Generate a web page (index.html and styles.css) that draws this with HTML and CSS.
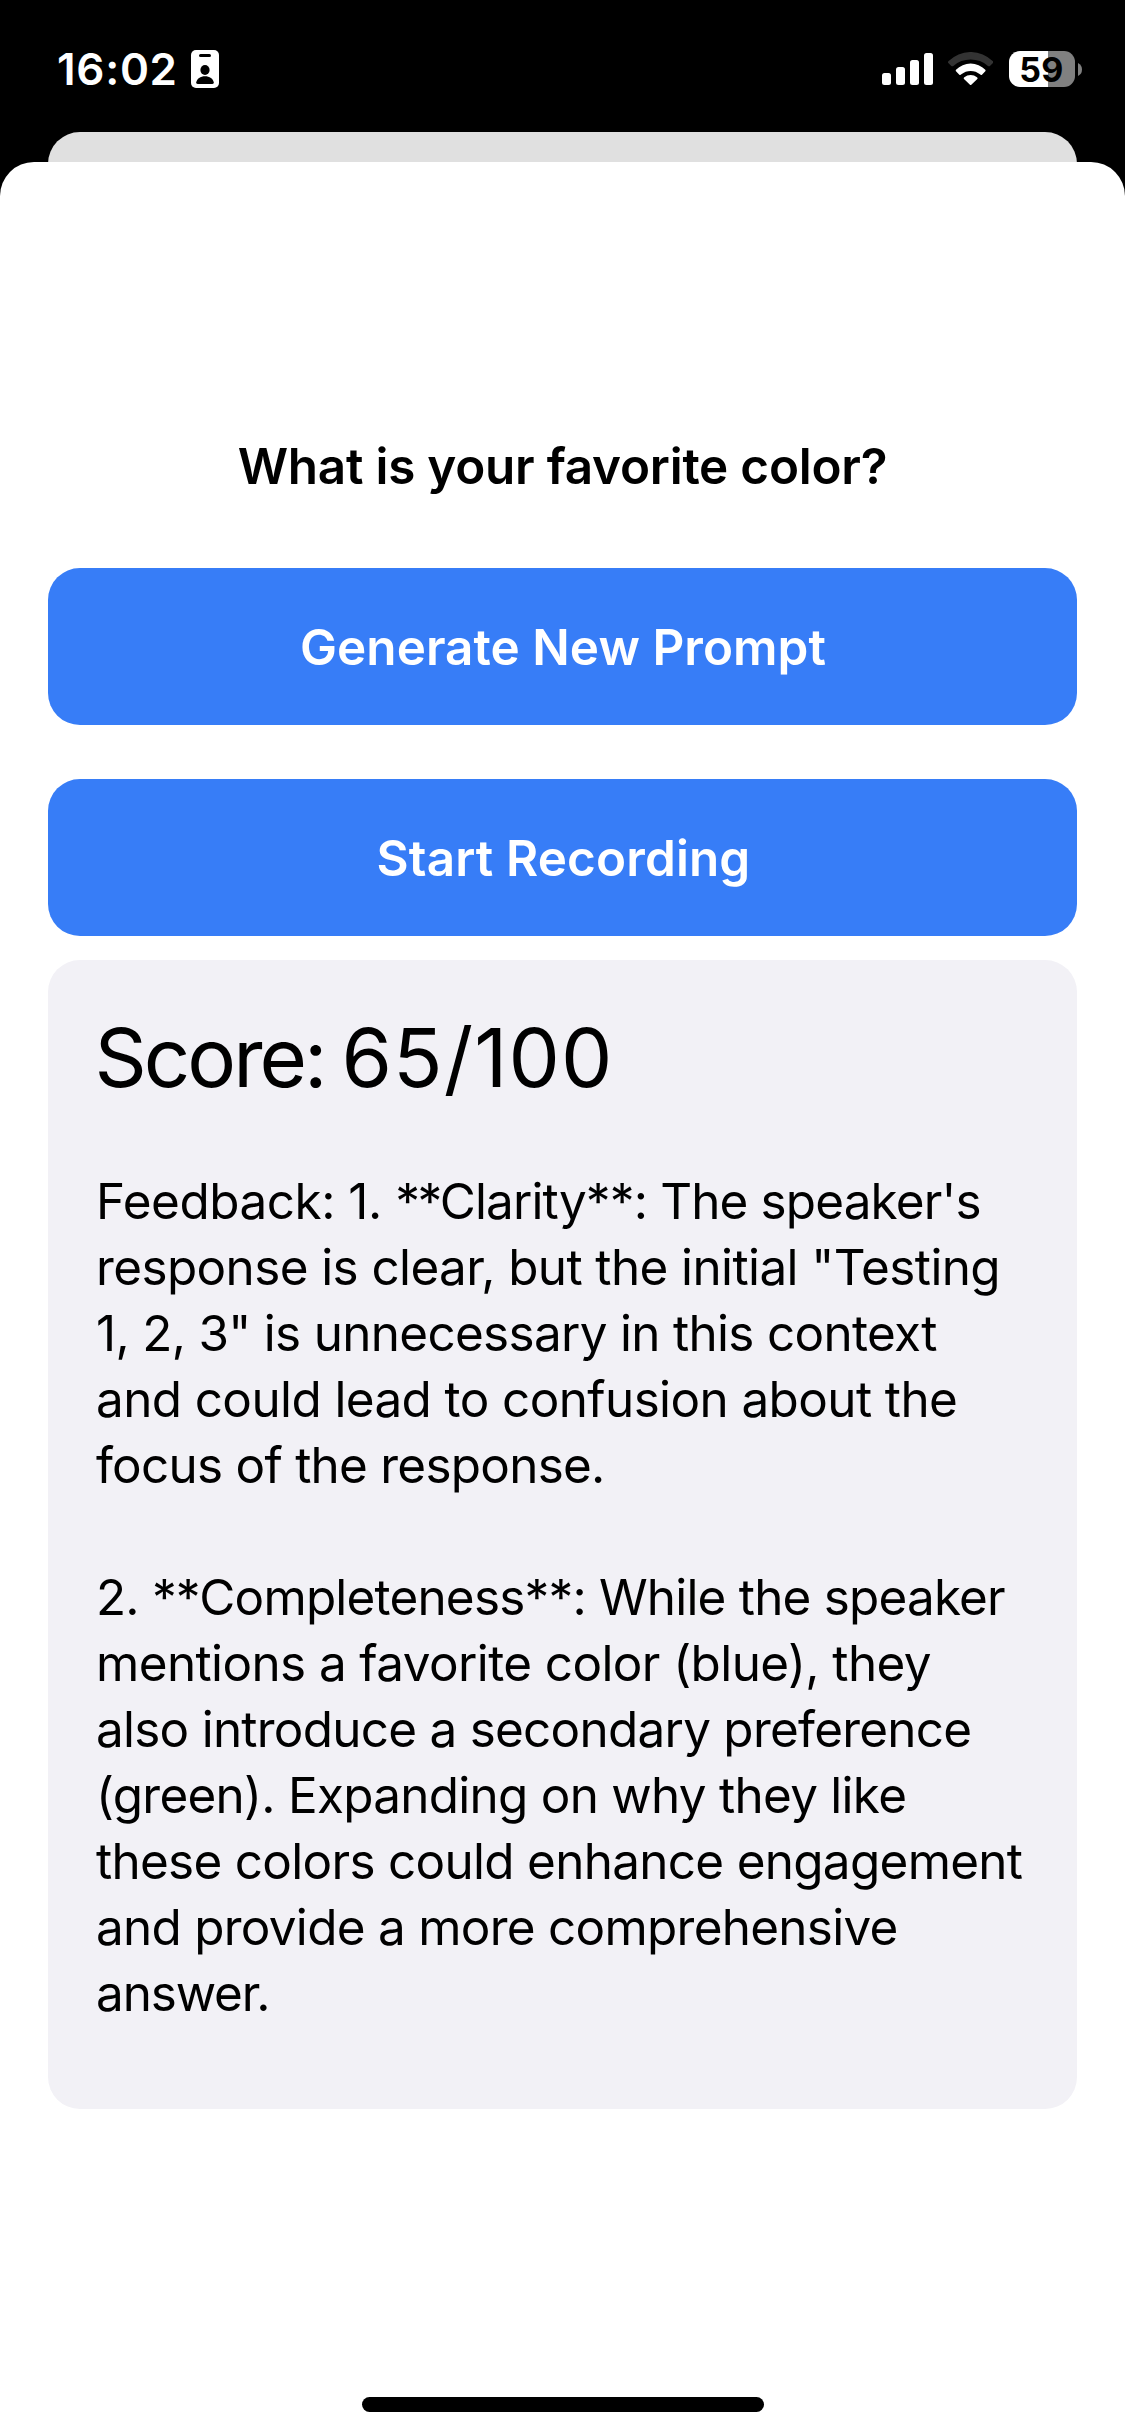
FILE: index.html
```html
<!DOCTYPE html>
<html lang="en">
<head>
<meta charset="utf-8">
<meta name="viewport" content="width=device-width">
<title>Speaking Practice</title>
<link rel="stylesheet" href="styles.css">
</head>
<body>
<div class="screen">
  <header class="status-bar">
    <div class="status-left">
      <span class="time">16:02</span>
      <svg class="badge" viewBox="0 0 28 38" aria-hidden="true">
        <rect width="28" height="38" rx="5" fill="#fff"/>
        <rect x="8" y="4" width="12" height="3" rx="1.5"/>
        <ellipse cx="14" cy="20" rx="4.6" ry="5"/>
        <path d="M7 34Q5.200 34 5.200 32.500C5.800 28.500 9.500 26.200 14 26.200S22.200 28.500 22.800 32.500Q22.800 34 21 34Z"/>
      </svg>
    </div>
    <div class="status-right">
      <svg class="signal" viewBox="0 0 51 32" fill="#fff" aria-hidden="true">
        <rect y="20" width="9" height="12" rx="2.500"/>
        <rect x="14" y="14" width="9" height="18" rx="2.500"/>
        <rect x="28" y="7" width="9" height="25" rx="2.500"/>
        <rect x="42" width="9" height="32" rx="2.500"/>
      </svg>
      <svg class="wifi" viewBox="265 66 136 99" fill="#fff" aria-hidden="true">
        <path fill="#333" d="M266 94A94 94 0 0 1 400 94Q402 97 400 99L391 108Q388 110 385 108A78 78 0 0 0 281 108Q278 110 275 108L266 99Q264 97 266 94Z"/>
        <path d="M289 119A62 62 0 0 1 377 119Q379 122 377 124L367 134Q364 136 361 133A44 44 0 0 0 305 133Q302 136 299 134L289 124Q287 122 289 119Z"/>
        <path d="M314 142A29 29 0 0 1 352 142Q355 145 353 147L335 164Q333 166 331 164L313 147Q311 145 314 142Z"/>
      </svg>
      <div class="battery"><span class="battery-body">59</span>
        <svg class="nub" viewBox="0 0 4 13" aria-hidden="true"><path fill="#808080" d="M0 0Q4 2 4 6.500T0 13Z"/></svg>
      </div>
    </div>
  </header>
  <div class="sheet-behind"></div>
  <main class="sheet">
    <h1 class="prompt">What is your favorite color?</h1>
    <button class="button generate">Generate New Prompt</button>
    <button class="button record">Start Recording</button>
    <section class="card">
      <h2 class="score"><span class="score-label">Score: </span><span class="score-value">65/100</span></h2>
      <p class="feedback">
        <span class="line l1"><span class="lead">Feedback: 1. </span><span class="stars">**</span>Clarity**: The speaker's</span>
        <span class="line l2">response is clear, but the initial "Testing</span>
        <span class="line l3">1, 2, 3" is unnecessary in this context</span>
        <span class="line l4">and could lead to confusion about the</span>
        <span class="line l5">focus of the response.</span>
      </p>
      <p class="feedback">
        <span class="line l6">2. **Completeness**: While the speaker</span>
        <span class="line l7">mentions a favorite color (blue), they</span>
        <span class="line l8">also introduce a secondary preference</span>
        <span class="line l9">(green). Expanding on why they like</span>
        <span class="line l10">these colors could enhance engagement</span>
        <span class="line l11">and provide a more comprehensive</span>
        <span class="line l12">answer.</span>
      </p>
    </section>
    <div class="home-indicator"></div>
  </main>
</div>
</body>
</html>
```
FILE: styles.css
```css
* { box-sizing: border-box; }
body {
  margin: 0;
  background: #000;
  color: #000;
  font-family: Inter, "Liberation Sans", sans-serif;
}
.screen {
  display: flex;
  flex-direction: column;
  width: 1125px;
  height: 2436px;
  overflow: hidden;
}
svg { display: block; }

/* Status bar */
.status-bar {
  display: flex;
  justify-content: space-between;
  height: 132px;
  padding: 50px 43px 0 57px;
}
.status-left, .status-right { display: flex; align-items: flex-start; }
.time {
  width: 134px;
  font-size: 44px;
  font-weight: 600;
  line-height: 39px;
  letter-spacing: 0.7px;
  color: #fff;
}
.badge { width: 28px; height: 38px; }
.signal { width: 51px; height: 32px; margin: 3px 15px 0 0; }
.wifi { width: 45.3px; height: 33px; margin: 2px 15.700px 0 0; }
.battery { display: flex; align-items: center; gap: 3px; margin-top: 1px; }
.battery-body {
  width: 66px;
  height: 36px;
  padding-right: 1px;
  border-radius: 11px;
  background: linear-gradient(90deg, #fff 39px, #808080 39px);
  font-size: 34px;
  font-weight: 700;
  line-height: 37px;
  letter-spacing: 0.4px;
  text-align: center;
}
.nub { width: 4px; height: 13px; }

/* Stacked sheets */
.sheet-behind {
  height: 60px;
  margin: 0 48px -30px;
  border-radius: 32px 32px 0 0;
  background: #e0e0e0;
  flex: none;
}
.sheet {
  position: relative;
  display: flex;
  flex-direction: column;
  flex: 1;
  padding: 271px 48px 24px;
  border-radius: 34px 34px 0 0;
  background: #fff;
}
.prompt {
  margin: 0 0 69px;
  font-size: 49.4px;
  font-weight: 600;
  line-height: 66px;
  letter-spacing: -0.22px;
  text-align: center;
}
.button {
  height: 157px;
  padding: 0;
  border: 0;
  border-radius: 32px;
  background: #377df7;
  color: #fff;
  font: 600 49.4px/66px Inter, "Liberation Sans", sans-serif;
  flex: none;
}
.generate { margin-bottom: 54px; padding-left: 1px; letter-spacing: 0.06px; }
.record { margin-bottom: 24px; padding-left: 2px; letter-spacing: 0.15px; }

/* Result card */
.card {
  height: 1149px;
  padding: 48px;
  border-radius: 32px;
  background: #f2f1f6;
  flex: none;
}
.score {
  margin: 0 0 60px -1.5px;
  font-size: 81.5px;
  font-weight: 400;
  line-height: 100px;
}
.score-label { letter-spacing: -3px; word-spacing: -3px; }
.score-value { letter-spacing: 1.1px; }
.feedback {
  margin: 0 0 66px;
  font-size: 49.4px;
  line-height: 66px;
}
.line { display: block; white-space: nowrap; }
.l1 { letter-spacing: -0.83px; }
.lead { letter-spacing: -0.46px; }
.stars { letter-spacing: -2.5px; }
.l2 { letter-spacing: -0.58px; }
.l3 { letter-spacing: -0.67px; }
.l4 { letter-spacing: -0.58px; }
.l5 { letter-spacing: -0.72px; }
.l6 { letter-spacing: -0.78px; }
.l7 { letter-spacing: -0.58px; }
.l8 { letter-spacing: -0.72px; }
.l9 { letter-spacing: -0.71px; }
.l10 { letter-spacing: -0.68px; }
.l11 { letter-spacing: -0.7px; }
.l12 { letter-spacing: -1.1px; }

.home-indicator {
  width: 402px;
  height: 15px;
  margin: auto auto 0;
  border-radius: 8px;
  background: #000;
}
```
